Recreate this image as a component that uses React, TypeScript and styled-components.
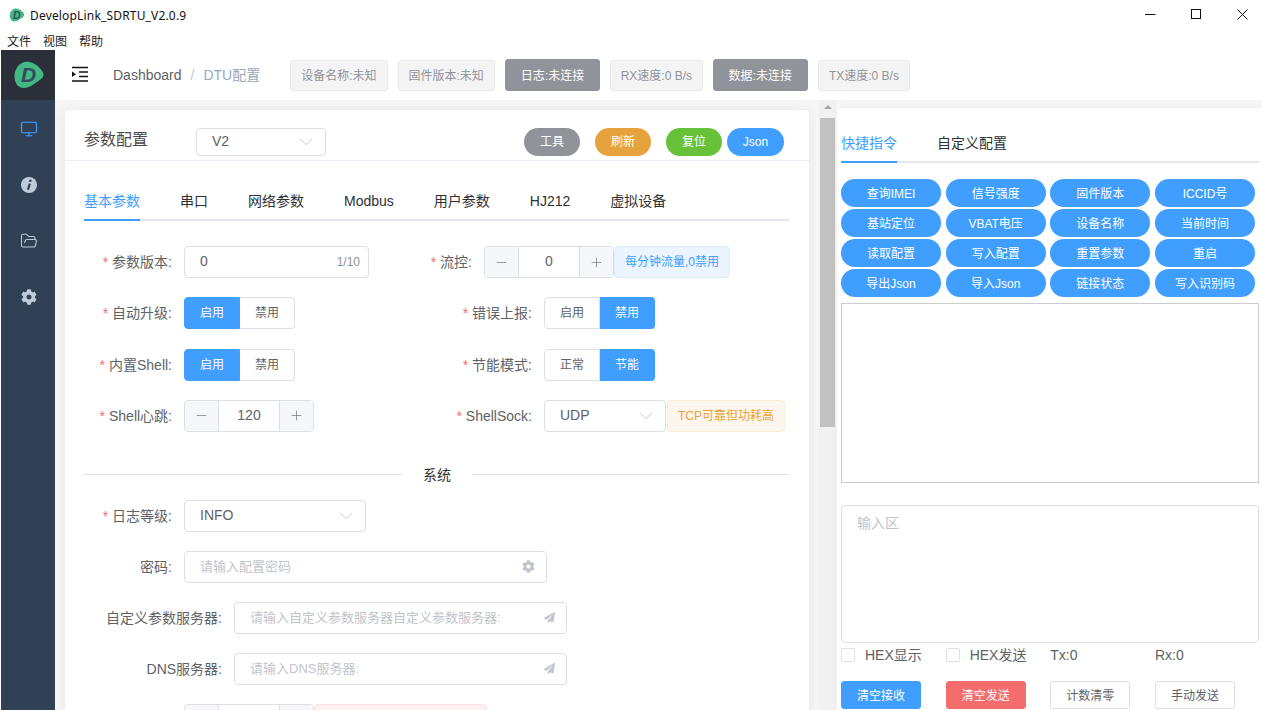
import React from 'react';
import styled, { createGlobalStyle } from 'styled-components';
import { Minus, Plus, ChevronDown, Monitor, FolderOpen } from 'lucide-react';
import { FaCog, FaPaperPlane } from 'react-icons/fa';

const GlobalStyle = createGlobalStyle`
  html, body {
    margin: 0;
    padding: 0;
    width: 1262px;
    height: 710px;
    overflow: hidden;
    background: #fff;
    font-family: "Liberation Sans", "Noto Sans CJK SC", sans-serif;
    line-height: 16px;
  }
  * { box-sizing: border-box; }
`;

const Page = styled.div`
  width: 1262px;
  height: 710px;
  display: flex;
  flex-direction: column;
  overflow: hidden;
`;

const TitleBar = styled.div`
  height: 30px;
  flex: none;
  display: flex;
  align-items: center;
  padding-left: 9px;
  background: #fff;
`;

const WindowTitle = styled.span`
  margin-left: 5px;
  font: 12px "Noto Sans", "Open Sans", sans-serif;
  letter-spacing: 0.17px;
  color: #111;
`;

const WindowButtons = styled.div`
  margin-left: auto;
  margin-right: -3px;
  display: flex;
`;

const WindowButton = styled.div`
  width: 46px;
  height: 30px;
  padding-bottom: 2px;
  display: flex;
  align-items: center;
  justify-content: center;
`;

const MenuBar = styled.div`
  height: 20px;
  flex: none;
  display: flex;
  gap: 12px;
  padding-left: 7px;
  align-items: center;
  font: 12px "Noto Sans CJK SC", sans-serif;
  color: #222;
`;

const Body = styled.div`
  flex: 1;
  min-height: 0;
  display: flex;
`;

const Sidebar = styled.div`
  width: 55px;
  flex: none;
  margin-left: 1px;
  margin-right: -1px;
  background: #304156;
  display: flex;
  flex-direction: column;
`;

const LogoBox = styled.div`
  height: 50px;
  background: #2b2f3a;
  display: flex;
  align-items: center;
  justify-content: center;
`;

const NavIcons = styled.div`
  display: flex;
  flex-direction: column;
  align-items: center;
  padding-top: 19px;
  gap: 37px;
`;

const NavItem = styled.div<{ $active?: boolean }>`
  width: 18px;
  height: 19px;
  display: flex;
  align-items: center;
  justify-content: center;
  color: ${p => (p.$active ? '#409eff' : '#bfcbd9')};
`;

const Main = styled.div`
  flex: 1;
  min-width: 0;
  display: flex;
  flex-direction: column;
  background: #f6f6f6;
`;

const Header = styled.div`
  height: 50px;
  flex: none;
  background: #fff;
  display: flex;
  align-items: center;
  padding-left: 16px;
`;

const Crumbs = styled.div`
  display: flex;
  font-size: 14px;
  margin-left: 24px;
  margin-right: 30px;
  white-space: nowrap;
  color: #97a8be;
`;

const CrumbLink = styled.span`
  color: #606266;
`;

const CrumbSep = styled.span`
  margin: 0 9px;
  color: #c0c4cc;
`;

const StatusList = styled.div`
  display: flex;
  align-items: center;
  gap: 10px;
`;

const Status = styled.div<{ $dark?: boolean; $tight?: boolean }>`
  height: ${p => (p.$dark ? '32px' : '31px')};
  padding: 2px ${p => (p.$dark ? '15px' : p.$tight ? '9.5px' : '10px')} 0;
  display: flex;
  align-items: center;
  border-radius: 3px;
  font-size: 12px;
  white-space: nowrap;
  background: ${p => (p.$dark ? '#909399' : '#f4f4f5')};
  color: ${p => (p.$dark ? '#fff' : '#909399')};
  border: 1px solid ${p => (p.$dark ? '#909399' : '#e9e9eb')};
`;

const Content = styled.div`
  flex: 1;
  min-height: 0;
  display: flex;
`;

const LeftPane = styled.div`
  width: 765px;
  flex: none;
  padding: 9px 10px 0 9px;
  overflow: hidden;
`;

const Card = styled.div`
  height: 700px;
  background: #fff;
  border: 1px solid #ebeef5;
  border-radius: 4px;
  box-shadow: 0 2px 12px rgba(0, 0, 0, 0.06);
`;

const CardHeader = styled.div`
  height: 51px;
  display: flex;
  align-items: center;
  padding: 13px 25px 0 19px;
  border-bottom: 1px solid #ebeef5;
`;

const CardTitle = styled.div`
  width: 112px;
  margin-top: -4px;
  font-size: 16px;
  color: #4a4a4a;
`;

const HeaderActions = styled.div`
  margin-left: auto;
  display: flex;
  align-items: center;
`;

const RoundButton = styled.div<{ $color: string; $gap?: number }>`
  width: ${p => (p.$color === '#409eff' ? '57px' : '56px')};
  height: 28px;
  margin-left: ${p => p.$gap ?? 15}px;
  border-radius: 14px;
  display: flex;
  align-items: center;
  justify-content: center;
  font-size: 12px;
  color: #fff;
  background: ${p => p.$color};
`;

const CardBody = styled.div`
  padding: 20px 20px 0 19px;
`;

const Tabs = styled.div<{ $gap: number }>`
  display: flex;
  gap: ${p => p.$gap}px;
  height: 40px;
  border-bottom: 2px solid #e4e7ed;
`;

const Tab = styled.div<{ $active?: boolean }>`
  height: 40px;
  line-height: 40px;
  font-size: 14px;
  white-space: nowrap;
  color: ${p => (p.$active ? '#409eff' : '#303133')};
  border-bottom: 2px solid ${p => (p.$active ? '#409eff' : 'transparent')};
`;

const FormGrid = styled.div`
  display: grid;
  grid-template-columns: 346px 1fr;
  row-gap: 19.33px;
  margin-top: 25px;
`;

const Stack = styled.div`
  display: flex;
  flex-direction: column;
  row-gap: 19px;
`;

const Field = styled.div`
  display: flex;
  align-items: center;
  height: 32px;
`;

const Label = styled.div<{ $w: number }>`
  width: ${p => p.$w}px;
  flex: none;
  padding-right: 12px;
  text-align: right;
  font-size: 14px;
  white-space: nowrap;
  color: #606266;
`;

const Star = styled.span`
  color: #f56c6c;
  margin-right: 4px;
`;

const TextBox = styled.div<{ $w: number; $h?: number }>`
  width: ${p => p.$w}px;
  height: ${p => p.$h ?? 32}px;
  flex: none;
  padding: 0 15px;
  display: flex;
  align-items: center;
  justify-content: space-between;
  border: 1px solid #dcdfe6;
  border-radius: 4px;
  background: #fff;
  font-size: 14px;
  color: #606266;
`;

const BoxValue = styled.span`
  margin-top: -2px;
`;

const Counter = styled.span`
  font-size: 12px;
  color: #909399;
  margin-right: -7px;
`;

const Placeholder = styled.span`
  font-size: 13px;
  white-space: nowrap;
  color: #c0c4cc;
`;

const BoxIcon = styled.span`
  display: flex;
  color: #c0c4cc;
  margin-right: -4px;
`;

const Stepper = styled.div`
  width: 130px;
  height: 32px;
  display: flex;
  border: 1px solid #dcdfe6;
  border-radius: 4px;
  overflow: hidden;
  flex: none;
`;

const StepButton = styled.div`
  width: 33px;
  flex: none;
  display: flex;
  align-items: center;
  justify-content: center;
  background: #f5f7fa;
  color: #606266;
`;

const StepValue = styled.div`
  flex: 1;
  padding-bottom: 2px;
  display: flex;
  align-items: center;
  justify-content: center;
  font-size: 14px;
  color: #606266;
  border-left: 1px solid #dcdfe6;
  border-right: 1px solid #dcdfe6;
`;

const Segments = styled.div`
  display: flex;
  height: 32px;
`;

const Segment = styled.div<{ $on?: boolean; $side: 'l' | 'r' }>`
  width: ${p => (p.$side === 'l' ? 56 : 55)}px;
  display: flex;
  align-items: center;
  justify-content: center;
  font-size: 12px;
  color: ${p => (p.$on ? '#fff' : '#606266')};
  background: ${p => (p.$on ? '#409eff' : '#fff')};
  border: 1px solid ${p => (p.$on ? '#409eff' : '#dcdfe6')};
  border-left-width: ${p => (p.$side === 'r' ? 0 : 1)}px;
  border-radius: ${p => (p.$side === 'l' ? '4px 0 0 4px' : '0 4px 4px 0')};
`;

const Hint = styled.div<{ $tone: 'blue' | 'orange' | 'red'; $w?: number; $flush?: boolean }>`
  height: 32px;
  margin-left: ${p => (p.$flush ? 0 : 1)}px;
  padding: 0 10px;
  display: flex;
  align-items: center;
  width: ${p => (p.$w ? `${p.$w}px` : 'auto')};
  border-radius: 4px;
  font-size: 12px;
  white-space: nowrap;
  color: ${p => ({ blue: '#409eff', orange: '#e6a23c', red: '#f56c6c' }[p.$tone])};
  background: ${p => ({ blue: '#ecf5ff', orange: '#fdf6ec', red: '#fef0f0' }[p.$tone])};
  border: 1px solid ${p => ({ blue: '#d9ecff', orange: '#faecd8', red: '#fde2e2' }[p.$tone])};
`;

const Divider = styled.div`
  position: relative;
  height: 1px;
  margin: 42px 0 25px;
  background: #dcdfe6;
`;

const DividerText = styled.span`
  position: absolute;
  left: 318px;
  top: -7px;
  padding: 0 21px;
  background: #fff;
  font-size: 14px;
  line-height: 16px;
  color: #303133;
`;

const ScrollTrack = styled.div`
  width: 17px;
  flex: none;
  background: #f1f1f1;
  display: flex;
  flex-direction: column;
  align-items: center;
  margin-left: -1px;
`;

const ScrollArrow = styled.div`
  margin-top: 5px;
  width: 0;
  height: 0;
  border-left: 4px solid transparent;
  border-right: 4px solid transparent;
  border-bottom: 4px solid #a3a3a3;
`;

const ScrollThumb = styled.div`
  width: 15px;
  height: 309px;
  margin-top: 9px;
  background: #c1c1c1;
`;

const RightPane = styled.div`
  flex: 1;
  min-width: 0;
  margin-left: 1px;
  margin-top: 8px;
  padding: 15px 3px 0 4px;
  background: #fff;
  border-radius: 4px 0 0 0;
  box-shadow: 0 0 6px rgba(0, 0, 0, 0.05);
`;

const CommandGrid = styled.div`
  display: grid;
  grid-template-columns: repeat(4, 100px);
  column-gap: 4.67px;
  row-gap: 2px;
  margin-top: 16px;
`;

const CommandButton = styled.div`
  height: 28px;
  padding-top: 2px;
  border-radius: 14px;
  display: flex;
  align-items: center;
  justify-content: center;
  background: #409eff;
  color: #fff;
  font-size: 12px;
  white-space: nowrap;
`;

const OutputBox = styled.div`
  height: 180px;
  margin-top: 6px;
  width: 418px;
  border: 1px solid #ccc;
`;

const InputBox = styled.div`
  height: 138px;
  width: 418px;
  margin-top: 22px;
  padding: 9px 15px;
  border: 1px solid #dcdfe6;
  border-radius: 4px;
  font-size: 14px;
  color: #c0c4cc;
`;

const RowGrid = styled.div<{ $top: number }>`
  display: grid;
  grid-template-columns: repeat(4, 104.67px);
  margin-top: ${p => p.$top}px;
  font-size: 14px;
  color: #606266;
`;

const CheckLabel = styled.div`
  display: flex;
  align-items: center;
  height: 16px;
  gap: 10px;
  font-size: 14px;
  color: #606266;
  white-space: nowrap;
`;

const CheckBox = styled.span`
  width: 14px;
  height: 14px;
  border: 1px solid #dcdfe6;
  border-radius: 2px;
  background: #fff;
`;

const Counter2 = styled.div`
  line-height: 16px;
  font-size: 14px;
  color: #606266;
`;

const ActionButton = styled.div<{ $kind?: 'primary' | 'danger' }>`
  width: 80px;
  height: 28px;
  padding-top: 2px;
  display: flex;
  align-items: center;
  justify-content: center;
  border-radius: 3px;
  font-size: 12px;
  white-space: nowrap;
  color: ${p => (p.$kind ? '#fff' : '#606266')};
  background: ${p => (p.$kind === 'primary' ? '#409eff' : p.$kind === 'danger' ? '#f56c6c' : '#fff')};
  border: 1px solid ${p => (p.$kind === 'primary' ? '#409eff' : p.$kind === 'danger' ? '#f56c6c' : '#dcdfe6')};
`;

const Logo: React.FC<{ size: number; fill: string; ink: string }> = ({ size, fill, ink }) => (
  <svg width={size} height={size} viewBox="0 0 32 32">
    <path
      d="M10 3.500C15 1.500 23 4 28 10.500c3 3.800 3.500 6.600.6 9-4.500 3.700-11.600 9.300-17.600 9.500C5.500 29.200 2 25 1.500 18.500 1 12 4.500 5.700 10 3.500Z"
      fill={fill}
    />
    <text x="15.5" y="23" fontSize="21" fontWeight="700" fontStyle="italic" textAnchor="middle" fill={ink} fontFamily="Liberation Sans, sans-serif">
      D
    </text>
  </svg>
);

const InfoDisc = () => (
  <svg width="16" height="16" viewBox="0 0 16 16">
    <circle cx="8" cy="8" r="8" fill="currentColor" />
    <circle cx="9.300" cy="3.800" r="1.300" fill="#304156" />
    <path d="M8.800 6.600 7 12.800" stroke="#304156" strokeWidth="2.100" />
  </svg>
);

const Chevron = () => <ChevronDown size={22} strokeWidth={1} color="#c0c4cc" style={{ marginRight: -7 }} />;

const Step: React.FC<{ value: string }> = ({ value }) => (
  <Stepper>
    <StepButton><Minus size={15} strokeWidth={1} /></StepButton>
    <StepValue>{value}</StepValue>
    <StepButton><Plus size={15} strokeWidth={1} /></StepButton>
  </Stepper>
);

const Toggle: React.FC<{ left: string; right: string; on: 'l' | 'r' }> = ({ left, right, on }) => (
  <Segments>
    <Segment $side="l" $on={on === 'l'}>{left}</Segment>
    <Segment $side="r" $on={on === 'r'}>{right}</Segment>
  </Segments>
);

const commands = [
  '查询IMEI', '信号强度', '固件版本', 'ICCID号',
  '基站定位', 'VBAT电压', '设备名称', '当前时间',
  '读取配置', '写入配置', '重置参数', '重启',
  '导出Json', '导入Json', '链接状态', '写入识别码',
];

const configTabs = ['基本参数', '串口', '网络参数', 'Modbus', '用户参数', 'HJ212', '虚拟设备'];

const App: React.FC = () => (
  <Page>
    <GlobalStyle />
    <TitleBar>
      <Logo size={16} fill="#42b883" ink="#35495e" />
      <WindowTitle>DevelopLink_SDRTU_V2.0.9</WindowTitle>
      <WindowButtons>
        <WindowButton>
          <svg width="11" height="11" viewBox="0 0 11 11"><path d="M0 5.500H10.500" stroke="#111" /></svg>
        </WindowButton>
        <WindowButton>
          <svg width="11" height="11" viewBox="0 0 11 11"><rect x=".5" y=".5" width="9" height="9" fill="none" stroke="#111" /></svg>
        </WindowButton>
        <WindowButton>
          <svg width="11" height="11" viewBox="0 0 11 11"><path d="M.5.5 10.500 10.500M10.500.5.500 10.500" stroke="#111" /></svg>
        </WindowButton>
      </WindowButtons>
    </TitleBar>
    <MenuBar>
      <span>文件</span>
      <span>视图</span>
      <span>帮助</span>
    </MenuBar>
    <Body>
      <Sidebar>
        <LogoBox>
          <Logo size={32} fill="#42b883" ink="#35495e" />
        </LogoBox>
        <NavIcons>
          <NavItem $active><Monitor size={18} strokeWidth={1.6} /></NavItem>
          <NavItem><InfoDisc /></NavItem>
          <NavItem><FolderOpen size={18} strokeWidth={1.4} /></NavItem>
          <NavItem><FaCog size={16} /></NavItem>
        </NavIcons>
      </Sidebar>
      <Main>
        <Header>
          <svg width="18" height="18" viewBox="0 0 18 18">
            <path d="M1 1.500H17M8 6H17M8 10.500H17M1 15H17" stroke="#111" strokeWidth="1.500" />
            <path d="M1 5.500 5 8.200 1 11Z" fill="#111" />
          </svg>
          <Crumbs>
            <CrumbLink>Dashboard</CrumbLink>
            <CrumbSep>/</CrumbSep>
            <span>DTU配置</span>
          </Crumbs>
          <StatusList>
            <Status>设备名称:未知</Status>
            <Status>固件版本:未知</Status>
            <Status $dark>日志:未连接</Status>
            <Status $tight>RX速度:0 B/s</Status>
            <Status $dark>数据:未连接</Status>
            <Status>TX速度:0 B/s</Status>
          </StatusList>
        </Header>
        <Content>
          <LeftPane>
            <Card>
              <CardHeader>
                <CardTitle>参数配置</CardTitle>
                <TextBox $w={130} $h={28}>
                  <BoxValue>V2</BoxValue>
                  <Chevron />
                </TextBox>
                <HeaderActions>
                  <RoundButton $color="#909399">工具</RoundButton>
                  <RoundButton $color="#e6a23c">刷新</RoundButton>
                  <RoundButton $color="#67c23a">复位</RoundButton>
                  <RoundButton $color="#409eff" $gap={5}>Json</RoundButton>
                </HeaderActions>
              </CardHeader>
              <CardBody>
                <Tabs $gap={40}>
                  {configTabs.map((t, i) => (
                    <Tab key={t} $active={i === 0}>{t}</Tab>
                  ))}
                </Tabs>
                <FormGrid>
                  <Field>
                    <Label $w={100}><Star>*</Star>参数版本:</Label>
                    <TextBox $w={185}>
                      <BoxValue>0</BoxValue>
                      <Counter>1/10</Counter>
                    </TextBox>
                  </Field>
                  <Field>
                    <Label $w={54}><Star>*</Star>流控:</Label>
                    <Step value="0" />
                    <Hint $tone="blue" $flush $w={116}>每分钟流量,0禁用</Hint>
                  </Field>
                  <Field>
                    <Label $w={100}><Star>*</Star>自动升级:</Label>
                    <Toggle left="启用" right="禁用" on="l" />
                  </Field>
                  <Field>
                    <Label $w={114}><Star>*</Star>错误上报:</Label>
                    <Toggle left="启用" right="禁用" on="r" />
                  </Field>
                  <Field>
                    <Label $w={100}><Star>*</Star>内置Shell:</Label>
                    <Toggle left="启用" right="禁用" on="l" />
                  </Field>
                  <Field>
                    <Label $w={114}><Star>*</Star>节能模式:</Label>
                    <Toggle left="正常" right="节能" on="r" />
                  </Field>
                  <Field>
                    <Label $w={100}><Star>*</Star>Shell心跳:</Label>
                    <Step value="120" />
                  </Field>
                  <Field>
                    <Label $w={114}><Star>*</Star>ShellSock:</Label>
                    <TextBox $w={122}>
                      <BoxValue>UDP</BoxValue>
                      <Chevron />
                    </TextBox>
                    <Hint $tone="orange">TCP可靠但功耗高</Hint>
                  </Field>
                </FormGrid>
                <Divider>
                  <DividerText>系统</DividerText>
                </Divider>
                <Stack>
                  <Field>
                    <Label $w={100}><Star>*</Star>日志等级:</Label>
                    <TextBox $w={182}>
                      <BoxValue>INFO</BoxValue>
                      <Chevron />
                    </TextBox>
                  </Field>
                  <Field>
                    <Label $w={100}>密码:</Label>
                    <TextBox $w={363}>
                      <Placeholder>请输入配置密码</Placeholder>
                      <BoxIcon><FaCog size={13} /></BoxIcon>
                    </TextBox>
                  </Field>
                  <Field>
                    <Label $w={150}>自定义参数服务器:</Label>
                    <TextBox $w={333}>
                      <Placeholder>请输入自定义参数服务器自定义参数服务器:</Placeholder>
                      <BoxIcon><FaPaperPlane size={11} /></BoxIcon>
                    </TextBox>
                  </Field>
                  <Field>
                    <Label $w={150}>DNS服务器:</Label>
                    <TextBox $w={333}>
                      <Placeholder>请输入DNS服务器:</Placeholder>
                      <BoxIcon><FaPaperPlane size={11} /></BoxIcon>
                    </TextBox>
                  </Field>
                  <Field>
                    <Label $w={100} />
                    <Step value="" />
                    <Hint $tone="red" $flush $w={173} />
                  </Field>
                </Stack>
              </CardBody>
            </Card>
          </LeftPane>
          <ScrollTrack>
            <ScrollArrow />
            <ScrollThumb />
          </ScrollTrack>
          <RightPane>
            <Tabs $gap={40}>
              <Tab $active>快捷指令</Tab>
              <Tab>自定义配置</Tab>
            </Tabs>
            <CommandGrid>
              {commands.map(c => (
                <CommandButton key={c}>{c}</CommandButton>
              ))}
            </CommandGrid>
            <OutputBox />
            <InputBox>输入区</InputBox>
            <RowGrid $top={4}>
              <CheckLabel><CheckBox />HEX显示</CheckLabel>
              <CheckLabel><CheckBox />HEX发送</CheckLabel>
              <Counter2>Tx:0</Counter2>
              <Counter2>Rx:0</Counter2>
            </RowGrid>
            <RowGrid $top={18}>
              <ActionButton $kind="primary">清空接收</ActionButton>
              <ActionButton $kind="danger">清空发送</ActionButton>
              <ActionButton>计数清零</ActionButton>
              <ActionButton>手动发送</ActionButton>
            </RowGrid>
          </RightPane>
        </Content>
      </Main>
    </Body>
  </Page>
);

export default App;
